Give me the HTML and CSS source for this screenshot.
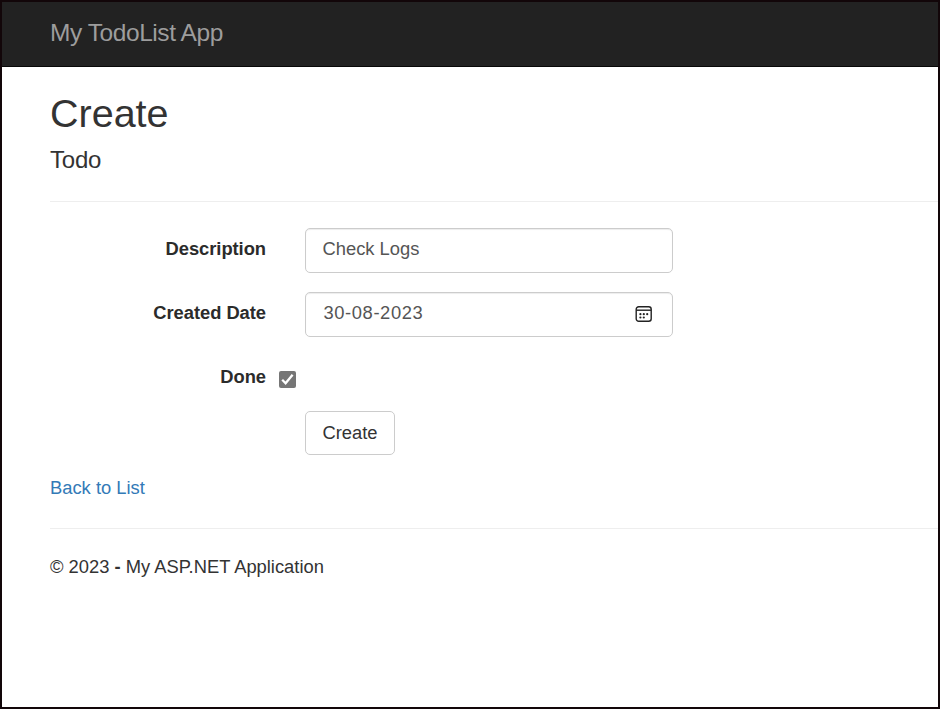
FILE: index.html
```html
<!DOCTYPE html>
<html lang="en">
<head>
<meta charset="utf-8">
<title>Create - My TodoList App</title>
<link rel="stylesheet" href="styles.css">
</head>
<body>
<header class="navbar"><a class="brand">My TodoList App</a></header>
<main class="content">
  <h1 class="title">Create</h1>
  <h2 class="subtitle">Todo</h2>
  <hr class="rule">
  <form class="form">
    <div class="row"><label class="label">Description</label><div class="control"><span>Check Logs</span></div></div>
    <div class="row"><label class="label">Created Date</label><div class="control date"><span class="date-text">30-08-2023</span>
      <svg class="calendar" viewBox="0 0 18 18" width="18" height="18" fill="none" stroke="#222" stroke-width="1.4"><rect x="1.2" y="1.7" width="15" height="14.6" rx="2.5"/><path d="M1.2 5.2h15"/><g fill="#222" stroke="none"><circle cx="5.4" cy="9.2" r="1.1"/><circle cx="8.8" cy="9.2" r="1.1"/><circle cx="12.2" cy="9.2" r="1.1"/><circle cx="5.4" cy="12.5" r="1.1"/><circle cx="8.8" cy="12.5" r="1.1"/></g></svg></div></div>
    <div class="row done"><label class="label">Done</label><svg class="check" viewBox="0 0 17 17" width="17" height="17"><rect width="17" height="17" rx="2" fill="#767676"/><path d="M3.2 8.8l3.4 3.5 7-8.6" fill="none" stroke="#fff" stroke-width="2.3"/></svg></div>
    <button class="button" type="button">Create</button>
  </form>
  <a class="back">Back to List</a>
  <hr class="rule footer-rule">
  <footer class="footer">© 2023 <b>-</b> My ASP.NET Application</footer>
</main>
</body>
</html>
```
FILE: styles.css
```css
* { box-sizing: border-box; }
body { margin: 0; height: 709px; overflow: hidden; border: 2px solid #120609; background: #fff; color: #333; font: 18.35px/26px "Liberation Sans", Arial, sans-serif; }
.navbar { height: 65px; padding: 17px 48px; background: #222; border-bottom: 1px solid #080808; }
.brand { color: #9d9d9d; font-size: 24.5px; line-height: 28px; letter-spacing: -.43px; }
.content { padding: 24px 0 0 48px; }
.title { margin: 0; font-size: 39.5px; line-height: 44px; font-weight: 400; }
.subtitle { margin: 11px 0 0; font-size: 24px; line-height: 28px; font-weight: 400; letter-spacing: -.2px; }
.rule { height: 1px; margin: 27px 0 26px; border: 0; background: #eee; }
.form { display: flex; flex-direction: column; align-items: flex-start; }
.row { display: flex; align-items: center; height: 45px; margin-bottom: 19px; }
.label { width: 216px; margin-top: -3px; text-align: right; font-weight: 700; color: #2b2b2b; letter-spacing: -.04px; }
.control { width: 368px; height: 45px; margin-left: 39px; padding: 0 17px 3px 16.5px; display: flex; align-items: center; border: 1px solid #ccc; border-radius: 5px; color: #555; box-shadow: inset 0 1px 1px rgba(0,0,0,.075); }
.date { justify-content: space-between; }
.date-text { margin-left: 1px; letter-spacing: .6px; }
.calendar { margin: 2px 2px 0 0; }
.check { margin: 1px 0 0 13px; }
.button { width: 90px; height: 44px; margin: -9px 0 0 255px; padding: 0; border: 1px solid #ccc; border-radius: 5px; background: #fff; color: #333; font: inherit; }
.back { display: block; margin-top: 20px; color: #337ab7; }
.footer-rule { margin: 27px 0 25px; }
```
